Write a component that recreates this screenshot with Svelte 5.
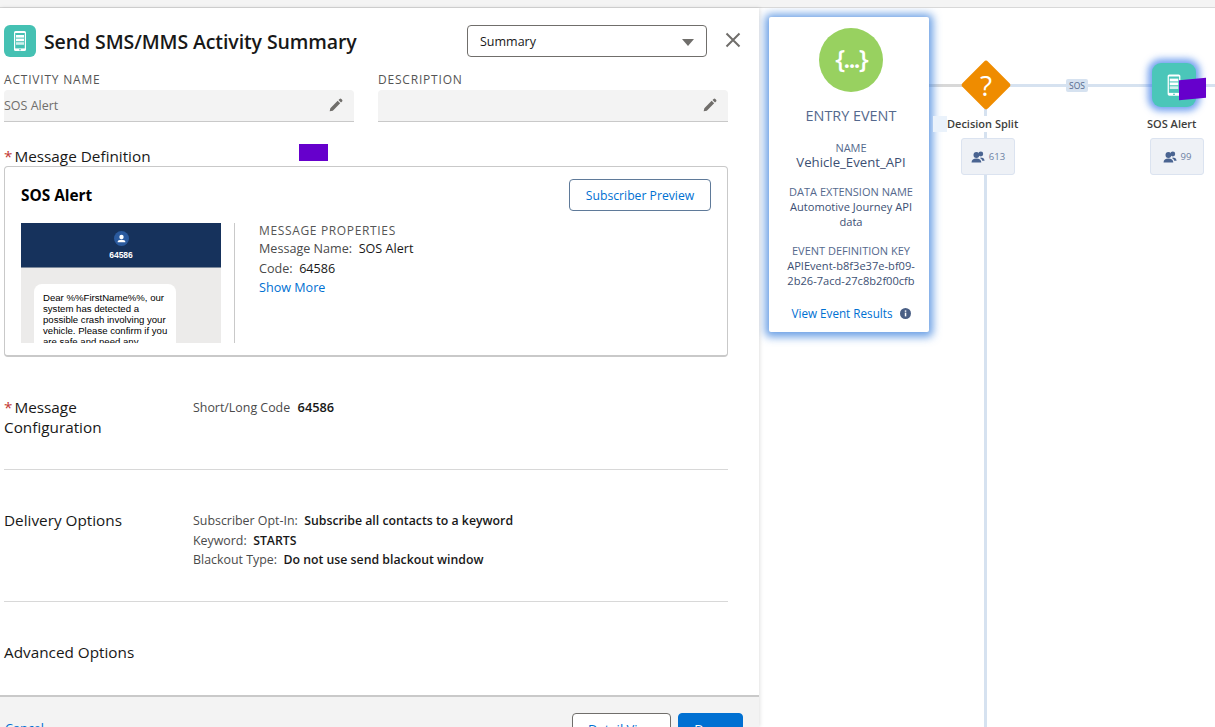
<script>
	const deliveryRows = [
		{ label: 'Subscriber Opt-In:', value: 'Subscribe all contacts to a keyword' },
		{ label: 'Keyword:', value: 'STARTS' },
		{ label: 'Blackout Type:', value: 'Do not use send blackout window' }
	];
	const pencil =
		'M13.9 1.1a1.5 1.5 0 0 1 2.1 0l.9.9a1.5 1.5 0 0 1 0 2.1l-1.3 1.3-3-3zM11.6 3.4l3 3-8.8 8.8-3.8.8.8-3.8z';
</script>

{#snippet phone(size)}
	<svg width={size} height={size} viewBox="0 0 32 32" aria-hidden="true">
		<rect x="10" y="6" width="12" height="20" rx="1.6" fill="#fff" />
		<rect x="11.2" y="8" width="9.6" height="15.4" fill="currentColor" />
		<rect x="12" y="10" width="8" height="2.6" fill="#fff" />
		<rect x="12" y="13.6" width="8" height="2.6" fill="#fff" />
		<rect x="12" y="17.2" width="8" height="2.6" fill="#fff" opacity="0.75" />
		<circle cx="16" cy="24.7" r="0.8" fill="currentColor" />
	</svg>
{/snippet}

{#snippet people()}
	<svg width="14" height="12" viewBox="0 0 14 12" aria-hidden="true">
		<circle cx="5.4" cy="4" r="2.9" fill="#4a6491" />
		<path d="M0.5 11.6c0-2.6 2-4 4.9-4s4.9 1.4 4.9 4z" fill="#4a6491" />
		<circle cx="9.8" cy="3" r="2.4" fill="#4a6491" />
		<path d="M9.6 6.4c2.4 0 4 1.2 4 3.4h-2.4c-.2-1.2-.9-2-2-2.6z" fill="#4a6491" />
	</svg>
{/snippet}

<div class="page">
	<div class="topbar"></div>
	<div class="main">
		<section class="panel">
			<div class="body">
				<header class="head">
					<span class="app-icon">{@render phone(32)}</span>
					<h1>Send SMS/MMS Activity Summary</h1>
					<div class="select">
						<span>Summary</span>
						<i class="caret"></i>
					</div>
					<button class="close" aria-label="Close">
						<svg width="16" height="16" viewBox="0 0 16 16">
							<path d="M1.5 1.5l13 13M14.5 1.5l-13 13" stroke="#706e6b" stroke-width="2" fill="none" />
						</svg>
					</button>
				</header>

				<div class="fields">
					<div class="field">
						<span class="caps">ACTIVITY NAME</span>
						<div class="input">
							<span>SOS Alert</span>
							<svg width="15" height="15" viewBox="0 0 18 18"><path d={pencil} fill="#706e6b" /></svg>
						</div>
					</div>
					<div class="field">
						<span class="caps">DESCRIPTION</span>
						<div class="input">
							<span></span>
							<svg width="15" height="15" viewBox="0 0 18 18"><path d={pencil} fill="#706e6b" /></svg>
						</div>
					</div>
				</div>

				<h2 class="def-title"><span class="req">*</span> Message Definition</h2>
				<div class="redact def-redact"></div>

				<div class="card">
					<div class="card-top">
						<h3>SOS Alert</h3>
						<button class="preview">Subscriber Preview</button>
					</div>
					<div class="card-main">
						<div class="thumb">
							<div class="thumb-head">
								<svg width="15" height="15" viewBox="0 0 15 15">
									<circle cx="7.5" cy="7.5" r="7.5" fill="#2a5a9e" />
									<circle cx="7.5" cy="6" r="2.2" fill="#fff" />
									<path d="M3.6 11.2c0-1.6 1.6-2.4 3.9-2.4s3.9.8 3.9 2.4z" fill="#fff" />
								</svg>
								<span>64586</span>
							</div>
							<div class="bubble">
								Dear %%FirstName%%, our<br />
								system has detected a<br />
								possible crash involving your<br />
								vehicle. Please confirm if you<br />
								are safe and need any<br />
								assistance.
							</div>
						</div>
						<div class="props">
							<div class="caps props-title">MESSAGE PROPERTIES</div>
							<div class="prop"><span class="muted">Message Name:</span>&nbsp; SOS Alert</div>
							<div class="prop"><span class="muted">Code:</span>&nbsp; 64586</div>
							<a class="link" href="#more">Show More</a>
						</div>
					</div>
				</div>

				<div class="row config">
					<h2><span class="req">*</span> Message Configuration</h2>
					<div class="row-body">
						<div class="line"><span class="muted">Short/Long Code</span>&nbsp; <b>64586</b></div>
					</div>
				</div>

				<div class="row delivery">
					<h2>Delivery Options</h2>
					<div class="row-body">
						{#each deliveryRows as r}
							<div class="line"><span class="muted">{r.label}</span>&nbsp; <b>{r.value}</b></div>
						{/each}
					</div>
				</div>

				<div class="row advanced">
					<h2>Advanced Options</h2>
				</div>
			</div>

			<footer class="foot">
				<a class="link cancel" href="#cancel">Cancel</a>
				<div class="foot-btns">
					<button class="btn">Detail View</button>
					<button class="btn primary">Done</button>
				</div>
			</footer>
		</section>

		<section class="canvas">
			<div class="line-h line-a"></div>
			<div class="line-h line-b"></div>
			<div class="line-v"></div>

			<div class="entry">
				<div class="entry-icon">{'{...}'}</div>
				<div class="entry-title">ENTRY EVENT</div>
				<div class="entry-label">NAME</div>
				<div class="entry-name">Vehicle_Event_API</div>
				<div class="entry-label">DATA EXTENSION NAME</div>
				<div class="entry-val">Automotive Journey API<br />data</div>
				<div class="entry-label">EVENT DEFINITION KEY</div>
				<div class="entry-val">APIEvent-b8f3e37e-bf09-<br />2b26-7acd-27c8b2f00cfb</div>
				<div class="entry-foot">
					<a class="link" href="#results">View Event Results</a>
					<svg width="11" height="11" viewBox="0 0 11 11">
						<circle cx="5.5" cy="5.5" r="5.5" fill="#4a5f85" />
						<rect x="4.8" y="4.6" width="1.5" height="3.8" fill="#fff" />
						<rect x="4.8" y="2.4" width="1.5" height="1.4" fill="#fff" />
					</svg>
				</div>
			</div>

			<div class="decision">
				<div class="diamond"></div>
				<span class="q">?</span>
			</div>
			<div class="node-label decision-label">Decision Split</div>
			<div class="count decision-count">{@render people()}<span>613</span></div>

			<div class="tag">SOS</div>

			<div class="sms-node">{@render phone(34)}</div>
			<div class="node-label sms-label">SOS Alert</div>
			<div class="count sms-count">{@render people()}<span>99</span></div>
			<div class="redact sms-redact"></div>
		</section>
	</div>
</div>

<style>
	:global(body) {
		margin: 0;
		background: #fff;
	}

	.page {
		width: 1215px;
		height: 727px;
		overflow: hidden;
		display: flex;
		flex-direction: column;
		font-family: 'Open Sans', 'Noto Sans', sans-serif;
		color: #181818;
	}

	.topbar {
		height: 7px;
		flex: none;
		background: #f4f4f4;
		border-bottom: 1px solid #d8d8d8;
	}

	.main {
		flex: 1;
		display: flex;
		min-height: 0;
	}

	.panel {
		position: relative;
		z-index: 2;
		width: 759px;
		flex: none;
		display: flex;
		flex-direction: column;
		background: #fff;
		box-shadow: 1px 0 4px rgba(0, 0, 0, 0.12);
	}

	.body {
		position: relative;
		flex: 1;
		padding: 17px 0 0 4px;
		width: 724px;
		min-height: 0;
	}

	.head {
		display: flex;
		align-items: center;
		height: 32px;
	}

	.app-icon {
		width: 32px;
		height: 32px;
		border-radius: 6px;
		background: #45c1b3;
		color: #45c1b3;
		flex: none;
	}

	.app-icon svg {
		display: block;
	}

	h1 {
		margin: 0 0 0 8px;
		width: 423px;
		flex: none;
		font-size: 19.5px;
		font-weight: 600;
		white-space: nowrap;
		letter-spacing: -0.1px;
	}

	.select {
		box-sizing: border-box;
		width: 240px;
		height: 32px;
		flex: none;
		display: flex;
		align-items: center;
		justify-content: space-between;
		padding: 0 12px;
		border: 1px solid #706e6b;
		border-radius: 4px;
		font-size: 12.5px;
	}

	.caret {
		width: 0;
		height: 0;
		border-left: 6px solid transparent;
		border-right: 6px solid transparent;
		border-top: 7px solid #706e6b;
		margin-top: 2px;
	}

	.close {
		all: unset;
		margin: -2px 0 0 18px;
		display: block;
		height: 16px;
		flex: none;
	}

	.close svg {
		display: block;
	}

	.fields {
		display: flex;
		gap: 24px;
		margin-top: 15px;
	}

	.field {
		width: 350px;
	}

	.caps {
		display: block;
		font-size: 12px;
		line-height: 16px;
		letter-spacing: 0.8px;
		color: #555;
	}

	.input {
		box-sizing: border-box;
		height: 32px;
		margin-top: 2px;
		display: flex;
		align-items: center;
		justify-content: space-between;
		padding-right: 11px;
		background: #f3f3f3;
		border-bottom: 1px solid #c9c9c9;
		border-radius: 4px 4px 0 0;
		font-size: 12.5px;
		color: #706e6b;
	}

	.def-title {
		margin-top: 24px;
		line-height: 20px;
	}

	h2 {
		margin: 0;
		font-size: 15.3px;
		font-weight: 400;
		line-height: 20px;
	}

	.req {
		color: #c23934;
		margin-right: -2px;
	}

	.redact {
		position: absolute;
		background: #6600cc;
	}

	.def-redact {
		left: 299px;
		top: 136px;
		width: 29px;
		height: 17px;
	}

	.card {
		box-sizing: border-box;
		height: 191px;
		border: 1px solid #c9c9c9;
		border-bottom: 2px solid #c9c9c9;
		border-radius: 4px;
	}

	.card-top {
		display: flex;
		align-items: center;
		justify-content: space-between;
		padding: 12px 16px 0;
	}

	h3 {
		margin: 0;
		font-size: 15.4px;
		font-weight: 700;
		color: #000;
	}

	.preview {
		box-sizing: border-box;
		width: 142px;
		height: 32px;
		background: #fff;
		border: 1px solid #5f7a99;
		border-radius: 4px;
		color: #0070d2;
		font: 12.2px 'Open Sans', sans-serif;
	}

	.card-main {
		display: flex;
		padding: 12px 0 0 16px;
	}

	.thumb {
		width: 200px;
		height: 120px;
		flex: none;
		overflow: hidden;
		background: #ecebea;
		font-family: 'Liberation Sans', Arial, sans-serif;
	}

	.thumb-head {
		box-sizing: border-box;
		height: 45px;
		padding-top: 8px;
		background: #16325c;
		border-bottom: 1px solid #7d8a9c;
		display: flex;
		flex-direction: column;
		align-items: center;
		gap: 4px;
		color: #fff;
		font-size: 8.5px;
		font-weight: 700;
	}

	.bubble {
		box-sizing: border-box;
		width: 142px;
		margin: 16px 0 0 13px;
		padding: 8px 0 8px 9px;
		background: #fff;
		border-radius: 8px;
		font-size: 9.6px;
		line-height: 11px;
		color: #000;
		white-space: nowrap;
	}

	.props {
		margin-left: 13px;
		padding-left: 24px;
		border-left: 1px solid #c9c9c9;
		font-size: 12.6px;
		height: 120px;
	}

	.props-title {
		line-height: 15px;
		letter-spacing: 0.65px;
		margin-bottom: 1px;
	}

	.prop {
		line-height: 20px;
	}

	.muted {
		color: #4a4a4a;
	}

	.link {
		color: #0070d2;
		text-decoration: none;
		font-size: 12.6px;
	}

	.props .link {
		display: block;
		line-height: 18px;
	}

	.row {
		display: flex;
		font-size: 12.4px;
	}

	.row h2 {
		width: 189px;
		flex: none;
		margin-top: -1px;
	}

	.row-body {
		line-height: 19.5px;
		color: #181818;
	}

	.line b {
		font-weight: 600;
		font-size: 12.3px;
	}

	.config {
		box-sizing: border-box;
		height: 113px;
		padding-top: 41px;
		border-bottom: 1px solid #d8d8d8;
	}

	.config h2 {
		width: 120px;
		margin-right: 69px;
	}

	.config .line b {
		font-size: 12.8px;
		margin-left: 1px;
	}

	.delivery {
		box-sizing: border-box;
		height: 132px;
		padding-top: 41px;
		border-bottom: 1px solid #d8d8d8;
	}

	.advanced {
		padding-top: 41px;
	}

	.foot {
		box-sizing: border-box;
		position: relative;
		height: 32px;
		flex: none;
		background: #f3f3f3;
		border-top: 2px solid #c9c9c9;
		padding: 16px 16px 0 5px;
		display: flex;
		justify-content: space-between;
	}

	.cancel {
		line-height: 24px;
		margin-top: 4px;
	}

	.foot-btns {
		display: flex;
		gap: 7px;
	}

	.btn {
		box-sizing: border-box;
		width: 99px;
		height: 32px;
		background: #fff;
		border: 1px solid #706e6b;
		border-radius: 4px;
		color: #0070d2;
		font: 13px 'Open Sans', sans-serif;
	}

	.btn.primary {
		width: 65px;
		background: #0070d2;
		border-color: #0070d2;
		color: #fff;
	}

	.canvas {
		position: relative;
		flex: 1;
		background: #fff;
		overflow: hidden;
	}

	.line-h {
		position: absolute;
		height: 3px;
		top: 76px;
	}

	.line-a {
		left: 170px;
		width: 60px;
		background: #d8d8d8;
	}

	.line-b {
		left: 230px;
		width: 230px;
		background: #d6e2f0;
	}

	.line-v {
		position: absolute;
		left: 225px;
		top: 90px;
		bottom: 0;
		width: 3px;
		background: #d6e2f0;
	}

	.entry {
		position: absolute;
		left: 10px;
		top: 9px;
		box-sizing: border-box;
		width: 160px;
		height: 315px;
		padding: 11px 0 0 4px;
		background: #fff;
		border-radius: 2px;
		box-shadow: 0 1px 8px 4px rgba(60, 130, 220, 0.75);
		text-align: center;
		color: #54698d;
		font-size: 11px;
		line-height: 15px;
	}

	.entry-icon {
		width: 64px;
		height: 64px;
		margin: 0 auto;
		border-radius: 50%;
		background: #98d160;
		color: #fff;
		font: 600 26px/60px 'Open Sans', sans-serif;
		letter-spacing: -2px;
	}

	.entry-title {
		margin-top: 14px;
		font-size: 14.4px;
		line-height: 20px;
	}

	.entry-label {
		margin-top: 14px;
	}

	.entry-name {
		font-size: 13.2px;
		line-height: 15px;
		color: #3c4f73;
	}

	.entry-val {
		color: #3c4f73;
		font-size: 11.1px;
		white-space: nowrap;
	}

	.entry-foot {
		margin-top: 18px;
		display: flex;
		align-items: center;
		justify-content: center;
		gap: 7px;
	}

	.entry-foot .link {
		font-size: 11.7px;
	}

	.decision {
		position: absolute;
		left: 202px;
		top: 52px;
		width: 50px;
		height: 50px;
		display: flex;
		align-items: center;
		justify-content: center;
	}

	.diamond {
		position: absolute;
		left: 7px;
		top: 7px;
		width: 36px;
		height: 36px;
		background: #ef8c00;
		border-radius: 3px;
		transform: rotate(45deg);
	}

	.q {
		position: relative;
		color: #fff;
		font-size: 28px;
		font-weight: 400;
		line-height: 1;
	}

	.node-label {
		position: absolute;
		top: 108px;
		padding: 0 4px;
		background: #fff;
		font-size: 11px;
		font-weight: 600;
		line-height: 16px;
		color: #3e3e3c;
		white-space: nowrap;
	}

	.decision-label {
		left: 174px;
		width: 100px;
		padding: 0 0 0 14px;
		background: linear-gradient(to right, #eaf2fb 14px, #fff 14px);
		box-sizing: border-box;
	}

	.sms-label {
		left: 384px;
		background: transparent;
	}

	.count {
		position: absolute;
		top: 130px;
		box-sizing: border-box;
		height: 37px;
		width: 54px;
		display: flex;
		align-items: center;
		justify-content: center;
		gap: 4px;
		background: #eef1f6;
		border: 1px solid #dbe3f0;
		border-radius: 3px;
		color: #6b7fa3;
		font-size: 9.5px;
	}

	.decision-count {
		left: 202px;
	}

	.sms-count {
		left: 391px;
	}

	.tag {
		position: absolute;
		left: 307px;
		top: 71px;
		padding: 0 3px;
		height: 13px;
		line-height: 13px;
		border-radius: 2px;
		background: #d6e2f0;
		color: #54698d;
		font-size: 8.5px;
	}

	.sms-node {
		position: absolute;
		left: 393px;
		top: 55px;
		width: 44px;
		height: 44px;
		display: flex;
		align-items: center;
		justify-content: center;
		border-radius: 9px;
		background: #4bc6b9;
		color: #4bc6b9;
		box-shadow: 0 0 7px 4px rgba(40, 110, 230, 0.65);
	}

	.sms-redact {
		left: 420px;
		top: 71px;
		width: 27px;
		height: 20px;
		transform: skewY(-5deg);
	}
</style>
